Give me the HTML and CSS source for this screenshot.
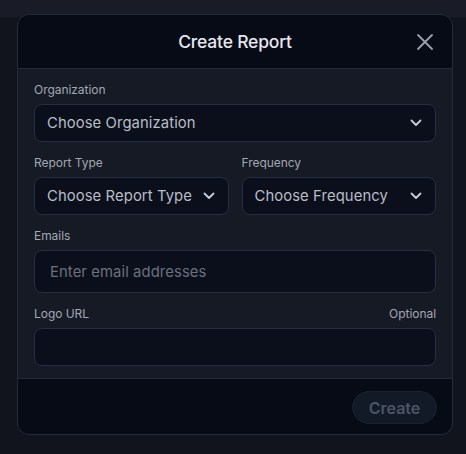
FILE: index.html
```html
<!DOCTYPE html>
<html>
<head>
<meta charset="utf-8">
<link rel="stylesheet" href="styles.css">
</head>
<body>
<div class="modal">
  <div class="header">
    <h2 class="title">Create Report</h2>
    <button class="close" aria-label="Close">
      <svg width="18" height="18" viewBox="0 0 18 18"><path d="M2 2L16 16M16 2L2 16" stroke="#9aa0ad" stroke-width="1.8" stroke-linecap="round"/></svg>
    </button>
  </div>
  <div class="body">
    <div class="field">
      <div class="label-row"><span class="label">Organization</span></div>
      <div class="select"><span>Choose Organization</span><svg class="chev" width="12" height="8" viewBox="0 0 12 8"><path d="M1.5 1.5L6 6L10.5 1.5" fill="none" stroke="#c9ccd4" stroke-width="1.8" stroke-linecap="round" stroke-linejoin="round"/></svg></div>
    </div>
    <div class="row">
      <div class="field">
        <div class="label-row"><span class="label">Report Type</span></div>
        <div class="select"><span>Choose Report Type</span><svg class="chev" width="12" height="8" viewBox="0 0 12 8"><path d="M1.5 1.5L6 6L10.5 1.5" fill="none" stroke="#c9ccd4" stroke-width="1.8" stroke-linecap="round" stroke-linejoin="round"/></svg></div>
      </div>
      <div class="field">
        <div class="label-row"><span class="label">Frequency</span></div>
        <div class="select"><span>Choose Frequency</span><svg class="chev" width="12" height="8" viewBox="0 0 12 8"><path d="M1.5 1.5L6 6L10.5 1.5" fill="none" stroke="#c9ccd4" stroke-width="1.8" stroke-linecap="round" stroke-linejoin="round"/></svg></div>
      </div>
    </div>
    <div class="field">
      <div class="label-row"><span class="label">Emails</span></div>
      <div class="input tall"><span class="placeholder">Enter email addresses</span></div>
    </div>
    <div class="field">
      <div class="label-row"><span class="label">Logo URL</span><span class="label">Optional</span></div>
      <div class="input"></div>
    </div>
  </div>
  <div class="footer">
    <button class="create">Create</button>
  </div>
</div>
</body>
</html>
```
FILE: styles.css
```css
* { box-sizing: border-box; }
html, body { margin: 0; padding: 0; }
body {
  width: 466px;
  height: 454px;
  background: linear-gradient(#191c26 0, #191c26 17px, #11141c 17px);
  font-family: "Inter", "Noto Sans", sans-serif;
  padding-top: 14px;
  padding-left: 17px;
}
.modal {
  width: 436px;
  height: 421px;
  border: 1px solid #232a3a;
  border-radius: 12px;
  background: #060b16;
  overflow: hidden;
  display: flex;
  flex-direction: column;
}
.header {
  height: 54px;
  flex: none;
  display: flex;
  align-items: center;
  justify-content: center;
  position: relative;
  border-bottom: 1px solid #222a3b;
}
.title {
  margin: 0;
  font-size: 17.5px;
  font-weight: 500;
  color: #e6e8ee;
  letter-spacing: -0.2px;
}
.close {
  position: absolute;
  right: 18px;
  top: 18px;
  background: none;
  border: 0;
  padding: 0;
  width: 18px;
  height: 18px;
  display: flex;
}
.body {
  background: #151a25;
  padding: 12px 16px 12px 16px;
  display: flex;
  flex-direction: column;
  gap: 12px;
  border-bottom: 1px solid #232a3b;
}
.row {
  display: flex;
  gap: 13px;
}
.row .field { flex: 1; min-width: 0; }
.field { display: flex; flex-direction: column; gap: 7px; }
.label-row {
  display: flex;
  justify-content: space-between;
  height: 16px;
  align-items: center;
}
.label {
  font-size: 12px;
  color: #a2a7b3;
  letter-spacing: -0.05px;
}
.select, .input {
  height: 38px;
  border: 1px solid #252e45;
  border-radius: 8px;
  background: #0b0f1b;
  display: flex;
  align-items: center;
}
.select {
  justify-content: space-between;
  padding: 0 13px 0 12px;
  font-size: 14.8px;
  color: #b9bdc7;
  letter-spacing: 0.1px;
}
.chev { flex: none; }
.input.tall { height: 43px; }
.input { padding: 0 15px; }
.placeholder {
  font-size: 14.8px;
  color: #6a707d;
  letter-spacing: 0.1px;
}
.footer {
  flex: 1;
  display: flex;
  align-items: flex-start;
  justify-content: flex-end;
  padding: 12px 15px 0 0;
}
.create {
  width: 85px;
  height: 33px;
  border-radius: 16.5px;
  border: 1px solid #1a2232;
  background: #121a28;
  color: #4c5564;
  font-family: inherit;
  font-size: 16px;
  font-weight: 600;
}
```
